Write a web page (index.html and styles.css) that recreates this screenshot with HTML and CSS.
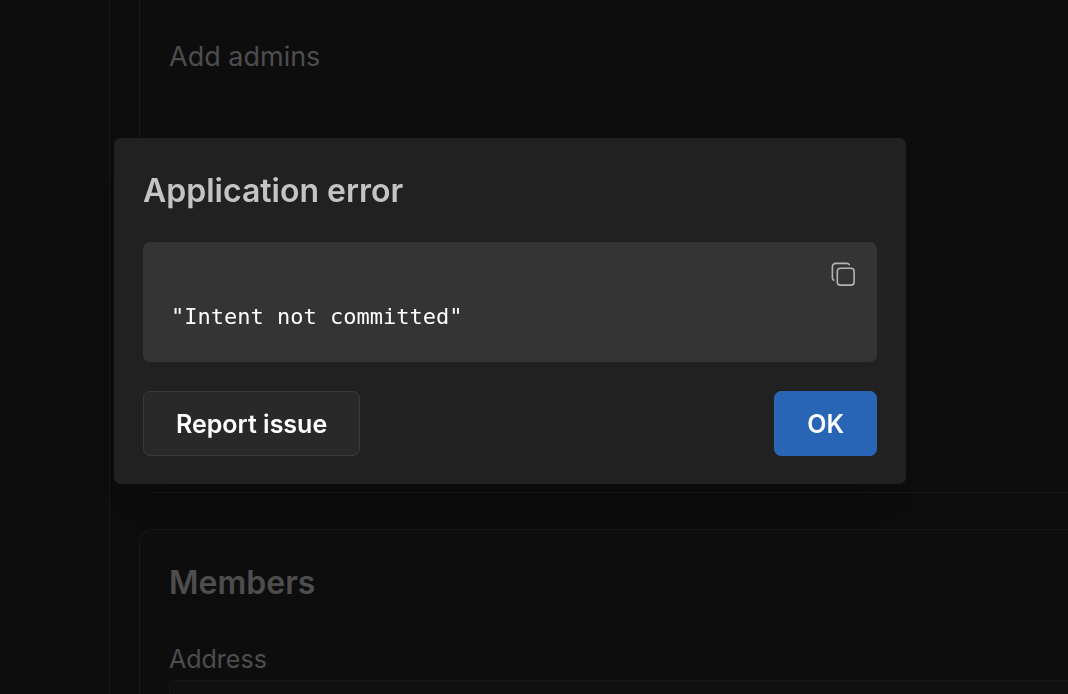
FILE: index.html
```html
<!DOCTYPE html>
<html lang="en">
<head>
<meta charset="utf-8">
<meta name="viewport" content="width=device-width, initial-scale=1">
<title>Application error</title>
<link rel="stylesheet" href="styles.css">
</head>
<body>
<div class="page">
  <aside class="sidebar"></aside>
  <main class="content">
    <section class="card card-admins">
      <p class="card-text">Add admins</p>
    </section>
    <section class="card card-members">
      <h2 class="heading">Members</h2>
      <label class="label" for="address">Address</label>
      <input class="field" id="address" type="text">
    </section>
  </main>
</div>
<div class="overlay">
  <div class="dialog" role="dialog" aria-modal="true" aria-labelledby="dialog-title">
    <h1 class="heading dialog-title" id="dialog-title">Application error</h1>
    <div class="code-box">
      <button class="copy" type="button" aria-label="Copy">
        <svg class="copy-icon" viewBox="0 0 26 26" fill="none" stroke="currentColor" stroke-width="1.6" stroke-linecap="round" stroke-linejoin="round" aria-hidden="true">
          <rect x="6.3" y="6.3" width="16.8" height="16.8" rx="3.2"/>
          <path d="M2.8 18.2 C2 17.8 1.4 17 1.4 16 V4.7 C1.4 2.8 2.8 1.4 4.7 1.4 H15.8 C16.8 1.4 17.8 1.9 18.2 2.7"/>
        </svg>
      </button>
      <pre class="code">"Intent not committed"</pre>
    </div>
    <div class="actions">
      <button class="button" type="button">Report issue</button>
      <button class="button button-primary" type="button">OK</button>
    </div>
  </div>
</div>
</body>
</html>
```
FILE: styles.css
```css
* {
  box-sizing: border-box;
}

body {
  margin: 0;
  background: #0c0c0c;
  color: #4d4d4d;
  font-family: Inter, "Liberation Sans", sans-serif;
  overflow: hidden;
}

.page {
  display: flex;
  height: 100vh;
  overflow: hidden;
}

.sidebar {
  flex: 0 0 110px;
  border-right: 1px solid #171717;
  background: #0d0d0d;
}

.content {
  flex: 1;
  display: flex;
  flex-direction: column;
  gap: 36px;
  min-width: 0;
  padding-left: 29px;
}

.card {
  flex: none;
  padding: 33px 0 32px 29px;
  border: 1px solid #171717;
  border-right: 0;
  border-radius: 14px 0 0 14px;
  background: #0d0d0d;
}

.card-admins {
  min-height: 493px;
  padding-top: 40px;
  border-top: 0;
  border-top-left-radius: 0;
}

.card-text {
  margin: 0;
  font-size: 27px;
  line-height: 34px;
}

.heading {
  margin: 0;
  font-size: 32px;
  font-weight: 600;
  line-height: 40px;
}

.label {
  display: block;
  margin-top: 40px;
  font-size: 25px;
  line-height: 32px;
}

.field {
  display: block;
  width: 100%;
  height: 64px;
  margin-top: 5px;
  border: 1px solid #171717;
  border-right: 0;
  border-radius: 6px 0 0 6px;
  background: #101010;
  color: inherit;
  font: inherit;
}

.overlay {
  position: fixed;
  inset: 0;
  padding: 138px 162px 0 114px;
}

.dialog {
  padding: 33px 29px 28px;
  border-radius: 7px;
  background: #212121;
  box-shadow: 0 29px 29px -22px rgba(0, 0, 0, 0.25);
}

.dialog-title {
  color: #c4c4c4;
}

.code-box {
  display: flex;
  flex-direction: column;
  margin: 31px 0 29px;
  padding: 20px 20px 30px 28px;
  border-radius: 7px;
  background: #343434;
}

.copy {
  align-self: flex-end;
  width: 26px;
  height: 26px;
  padding: 0;
  border: 0;
  background: none;
  color: #b3b3b3;
}

.copy-icon {
  display: block;
}

.code {
  margin: 14px 0 0;
  color: #fff;
  font-family: "DejaVu Sans Mono", monospace;
  font-size: 22px;
  line-height: 30px;
}

.actions {
  display: flex;
  justify-content: space-between;
}

.button {
  padding: 1px 32px 0;
  border: 1px solid #3a3a3a;
  border-radius: 7px;
  background: #292929;
  color: #fff;
  font-family: inherit;
  font-size: 25px;
  font-weight: 600;
  line-height: 62px;
}

.button-primary {
  border-color: #2866b5;
  background: #2866b5;
}
```
